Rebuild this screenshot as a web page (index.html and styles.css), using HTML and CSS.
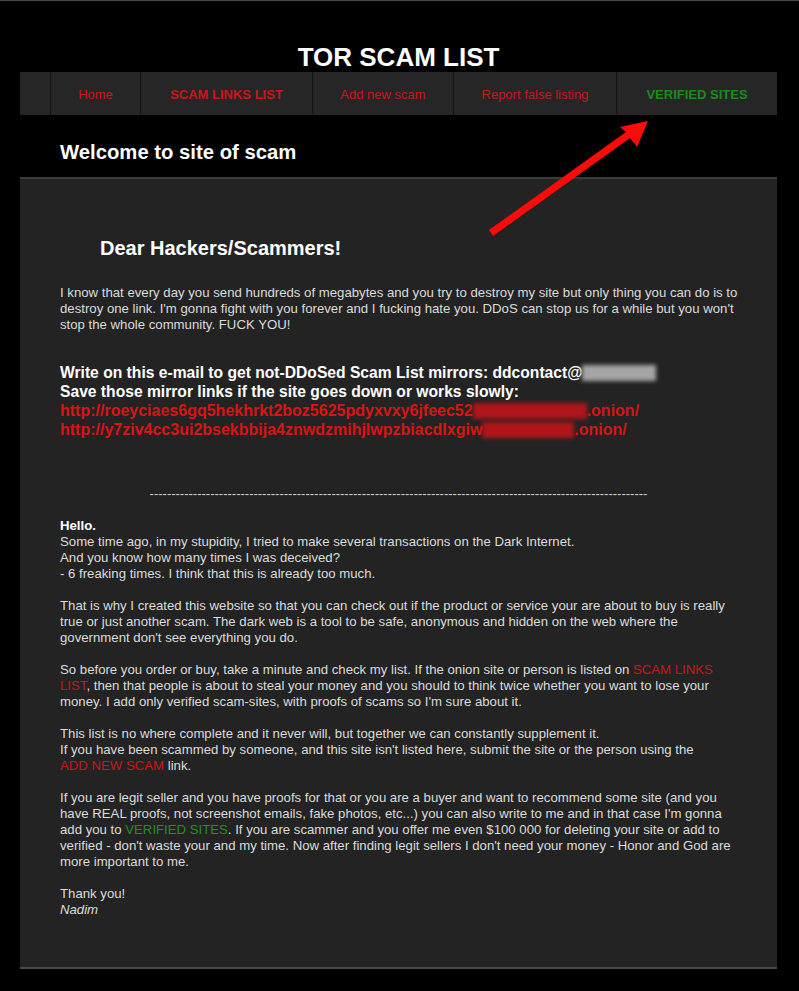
FILE: index.html
```html
<!DOCTYPE html>
<html lang="en">
<head>
<meta charset="utf-8">
<title>TOR SCAM LIST</title>
<link rel="stylesheet" href="styles.css">
</head>
<body>
<div class="page">
  <h1 class="site-title">TOR SCAM LIST</h1>
  <nav class="nav">
    <span class="nav-item nav-blank"></span>
    <a class="nav-item red" href="#">Home</a>
    <a class="nav-item red bold" href="#">SCAM LINKS LIST</a>
    <a class="nav-item red" href="#">Add new scam</a>
    <a class="nav-item red" href="#">Report false listing</a>
    <a class="nav-item green bold" href="#">VERIFIED SITES</a>
  </nav>
  <h2 class="welcome">Welcome to site of scam</h2>
  <main class="content">
    <h3 class="dear">Dear Hackers/Scammers!</h3>
    <p class="intro">I know that every day you send hundreds of megabytes and you try to destroy my site but only thing you can do is to<br>destroy one link. I'm gonna fight with you forever and I fucking hate you. DDoS can stop us for a while but you won't<br>stop the whole community. FUCK YOU!</p>
    <div class="mirrors">
      <div class="mirror-note">Write on this e-mail to get not-DDoSed Scam List mirrors: ddcontact@<span class="blur blur-grey"></span></div>
      <div class="mirror-note">Save those mirror links if the site goes down or works slowly:</div>
      <div><a class="mirror-link" href="#">http://roeyciaes6gq5hekhrkt2boz5625pdyxvxy6jfeec52<span class="blur blur-red b1"></span>.onion/</a></div>
      <div><a class="mirror-link" href="#">http://y7ziv4cc3ui2bsekbbija4znwdzmihjlwpzbiacdlxgiw<span class="blur blur-red b2"></span>.onion/</a></div>
    </div>
    <div class="divider">-------------------------------------------------------------------------------------------------------------------</div>
    <p class="para"><b>Hello.</b><br>Some time ago, in my stupidity, I tried to make several transactions on the Dark Internet.<br>And you know how many times I was deceived?<br>- 6 freaking times. I think that this is already too much.</p>
    <p class="para">That is why I created this website so that you can check out if the product or service your are about to buy is really<br>true or just another scam. The dark web is a tool to be safe, anonymous and hidden on the web where the<br>government don't see everything you do.</p>
    <p class="para">So before you order or buy, take a minute and check my list. If the onion site or person is listed on <a class="inline-red" href="#">SCAM LINKS<br>LIST</a>, then that people is about to steal your money and you should to think twice whether you want to lose your<br>money. I add only verified scam-sites, with proofs of scams so I'm sure about it.</p>
    <p class="para">This list is no where complete and it never will, but together we can constantly supplement it.<br>If you have been scammed by someone, and this site isn't listed here, submit the site or the person using the<br><a class="inline-red" href="#">ADD NEW SCAM</a> link.</p>
    <p class="para">If you are legit seller and you have proofs for that or you are a buyer and want to recommend some site (and you<br>have REAL proofs, not screenshot emails, fake photos, etc...) you can also write to me and in that case I'm gonna<br>add you to <a class="inline-green" href="#">VERIFIED SITES</a>. If you are scammer and you offer me even $100 000 for deleting your site or add to<br>verified - don't waste your and my time. Now after finding legit sellers I don't need your money - Honor and God are<br>more important to me.</p>
    <p class="para">Thank you!<br><i>Nadim</i></p>
  </main>
</div>
<svg class="arrow" width="799" height="260" viewBox="0 0 799 260" aria-hidden="true">
  <polygon points="489,230 626,132 620,127 648,121 637,147 630,138 493,236" fill="#ff0a0a"/>
</svg>
</body>
</html>
```

FILE: styles.css
```css
html, body {
  margin: 0;
  padding: 0;
  background: #000;
}
body {
  border-top: 1px solid #4a4a4a;
  font-family: "Liberation Sans", Arial, sans-serif;
  color: #dcdcdc;
  position: relative;
  min-height: 990px;
}
.page {
  width: 757px;
  margin-left: 20px;
}
.site-title {
  margin: 0;
  padding-top: 41px;
  font-size: 26px;
  line-height: 30px;
  font-weight: bold;
  color: #fff;
  text-align: center;
}
.nav {
  display: grid;
  grid-template-columns: 30px 90px 172px 141px 163px 1fr;
  height: 43px;
  background: #262626;
}
.nav-item {
  display: flex;
  align-items: center;
  justify-content: center;
  padding-top: 2px;
  border-left: 1px solid #121212;
  font-size: 13px;
  text-decoration: none;
}
.nav-blank {
  border-left: none;
}
.red { color: #c8161b; }
.green { color: #1d8a1d; }
.bold { font-weight: bold; }
.welcome {
  margin: 0;
  padding: 26px 0 13px 40px;
  font-size: 20.3px;
  line-height: 23px;
  font-weight: bold;
  color: #fff;
}
.content {
  background: #232323;
  border-top: 2px solid #3a3a3a;
  border-bottom: 2px solid #4a4a4a;
  padding: 58px 10px 49px 40px;
}
.dear {
  margin: 0;
  padding-left: 40px;
  font-size: 20px;
  line-height: 23px;
  font-weight: bold;
  color: #fff;
}
.intro {
  margin: 25px 0 0;
  font-size: 13.2px;
  line-height: 16px;
}
.mirrors {
  margin-top: 30px;
  font-size: 16px;
  line-height: 19px;
  font-weight: bold;
  color: #fff;
}
.mirror-note {
  font-size: 15.65px;
}
.mirror-link {
  color: #d91414;
  text-decoration: none;
}
.blur {
  display: inline-block;
  height: 16px;
  vertical-align: -3px;
  filter: blur(2px);
}
.blur-grey {
  width: 74px;
  background: #a5a5a5;
}
.blur-red {
  background: #b0161b;
}
.b1 { width: 114px; }
.b2 { width: 92px; }
.divider {
  margin-top: 47px;
  text-align: center;
  white-space: nowrap;
  font-size: 13px;
  line-height: 16px;
  color: #cfcfcf;
  position: relative;
  left: -15px;
}
.para {
  margin: 16px 0 0;
  font-size: 13.2px;
  line-height: 16px;
}
.para b {
  color: #fff;
}
.inline-red {
  color: #c8161b;
  text-decoration: none;
}
.inline-green {
  color: #23901f;
  text-decoration: none;
}
.arrow {
  position: absolute;
  left: 0;
  top: -1px;
}
```
